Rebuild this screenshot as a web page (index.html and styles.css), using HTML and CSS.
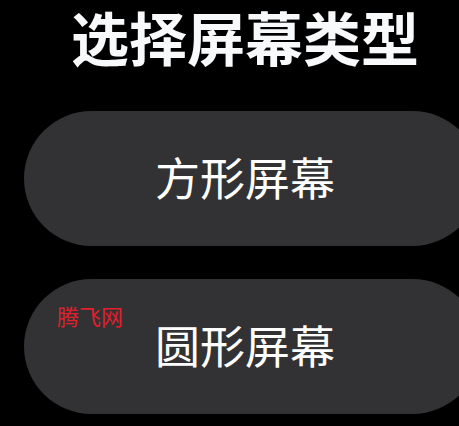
FILE: index.html
```html
<!DOCTYPE html>
<html lang="zh-CN">
<head>
  <meta charset="UTF-8">
  <title>选择屏幕类型</title>
  <meta name="viewport" content="width=device-width, initial-scale=1">
  <link rel="stylesheet" href="styles.css">
</head>
<body>
  <div class="screen">
    <h1 class="title">选择屏幕类型</h1>
    <button class="choice">方形屏幕</button>
    <button class="choice">
      <span class="watermark">腾飞网</span>
      圆形屏幕
    </button>
  </div>
</body>
</html>
```

FILE: styles.css
```css
html, body {
  margin: 0;
  padding: 0;
  background: #000;
  overflow: hidden;
  font-family: "Noto Sans CJK SC", "Noto Sans", sans-serif;
}
.screen {
  padding-left: 24px;
  display: flex;
  flex-direction: column;
  gap: 33px;
}
.title {
  margin: 0 0 6px 0;
  padding-left: 7px;
  color: #f8f9fb;
  font-size: 58px;
  font-weight: 700;
  line-height: 72px;
  text-align: center;
}
.choice {
  position: relative;
  width: 456px;
  height: 135px;
  border: none;
  border-radius: 68px;
  background: #323234;
  color: #fff;
  font-family: inherit;
  font-size: 45px;
  font-weight: 400;
  padding: 0 14px 5px 0;
  cursor: pointer;
}
.watermark {
  position: absolute;
  left: 33px;
  top: 24px;
  color: #e0202c;
  font-size: 22px;
  line-height: 24px;
}
```
